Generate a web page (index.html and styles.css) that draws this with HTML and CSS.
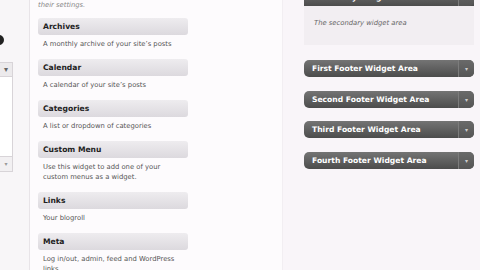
FILE: index.html
```
<!DOCTYPE html>
<html lang="en">
  <head>
    <meta charset="UTF-8" />
    <title>Widgets</title>
    <link rel="stylesheet" href="styles.css">
  </head>
  <body>
    <div class="sidebar">
      <div class="dot"></div>
      <div class="mini">
        <div class="mini-head">▾</div>
        <div class="mini-body"></div>
        <div class="mini-head small">▾</div>
      </div>
    </div>
    <div class="main">
      <div class="intro">
        <div>back here to deactivate them and delete</div>
        <div>their settings.</div>
      </div>
      <div class="widget">
        <div class="widget-title">Archives</div>
        <div class="widget-desc">A monthly archive of your site’s posts</div>
      </div>
      <div class="widget">
        <div class="widget-title">Calendar</div>
        <div class="widget-desc">A calendar of your site’s posts</div>
      </div>
      <div class="widget">
        <div class="widget-title">Categories</div>
        <div class="widget-desc">A list or dropdown of categories</div>
      </div>
      <div class="widget">
        <div class="widget-title">Custom Menu</div>
        <div class="widget-desc">Use this widget to add one of your custom menus as a widget.</div>
      </div>
      <div class="widget">
        <div class="widget-title">Links</div>
        <div class="widget-desc">Your blogroll</div>
      </div>
      <div class="widget">
        <div class="widget-title">Meta</div>
        <div class="widget-desc">Log in/out, admin, feed and WordPress links</div>
      </div>
    </div>
    <div class="side">
      <div class="area open">
        <div class="area-head">Secondary Widget Area<span class="arrow">▾</span></div>
        <div class="area-body">The secondary widget area</div>
      </div>
      <div class="area"><div class="area-head">First Footer Widget Area<span class="arrow">▾</span></div></div>
      <div class="area"><div class="area-head">Second Footer Widget Area<span class="arrow">▾</span></div></div>
      <div class="area"><div class="area-head">Third Footer Widget Area<span class="arrow">▾</span></div></div>
      <div class="area"><div class="area-head">Fourth Footer Widget Area<span class="arrow">▾</span></div></div>
    </div>
  </body>
</html>
```
FILE: styles.css
```
html,
body {
  margin: 0;
  height: 270px;
  overflow: hidden;
}
body {
  display: flex;
  font-family: "DejaVu Sans", Verdana, sans-serif;
  background-color: #fdfbfd;
  color: #333;
}
.sidebar {
  flex: none;
  width: 29px;
  border-right: 1px solid #e8e4e8;
  background-color: #f8f6f8;
}
.dot {
  width: 10px;
  height: 10px;
  margin: 35px 0 0 -6px;
  border-radius: 50%;
  background-color: #222;
}
.mini {
  width: 12px;
  margin-top: 17px;
  border-right: 1px solid #d8d4d8;
  background-color: #fff;
}
.mini-head {
  height: 13px;
  border-top: 1px solid #d8d4d8;
  border-bottom: 1px solid #d8d4d8;
  background-color: #eceaec;
  color: #666;
  font-size: 8px;
  line-height: 13px;
  text-align: center;
}
.mini-head.small {
  height: 14px;
  color: #999;
  font-size: 6px;
  background-color: #f2f0f2;
}
.mini-body {
  height: 79px;
}
.main {
  flex: none;
  width: 244px;
  padding-left: 8px;
}
.intro {
  margin-top: -10px;
  margin-bottom: 8px;
  font-size: 6.8px;
  line-height: 10px;
  font-style: italic;
  color: #888;
  white-space: nowrap;
}
.widget {
  width: 150px;
}
.widget-title {
  height: 17px;
  padding-left: 5px;
  border-radius: 3px;
  background: linear-gradient(#eeecef, #dcd9de);
  font-size: 7.6px;
  font-weight: bold;
  line-height: 17px;
  color: #222;
}
.widget-desc {
  margin: 4px 0 10px;
  padding: 0 8px 0 5px;
  font-size: 6.8px;
  line-height: 10px;
  color: #555;
}
.side {
  flex: 1;
  padding-left: 21px;
  background-color: #f9f5f9;
  border-left: 1px solid #f2eef2;
}
.area {
  width: 170px;
  margin-bottom: 13.6px;
}
.area.open {
  margin-top: -11px;
  margin-bottom: 15px;
}
.area-head {
  position: relative;
  height: 17px;
  padding-left: 8px;
  border-radius: 5px;
  background: linear-gradient(#747474, #4c4c4c);
  color: #fff;
  font-size: 7.6px;
  font-weight: bold;
  line-height: 17px;
}
.area.open .area-head {
  border-radius: 0;
}
.arrow {
  position: absolute;
  top: 0;
  right: 0;
  width: 15px;
  height: 17px;
  border-left: 1px solid #7c7c7c;
  border-radius: 0 5px 5px 0;
  background: linear-gradient(#6a6a6a, #555);
  color: #ccc;
  font-size: 6px;
  text-align: center;
}
.area-body {
  height: 39px;
  padding-left: 10px;
  background-color: #f2eef2;
  font-size: 6.8px;
  font-style: italic;
  line-height: 34px;
  color: #666;
}
```
